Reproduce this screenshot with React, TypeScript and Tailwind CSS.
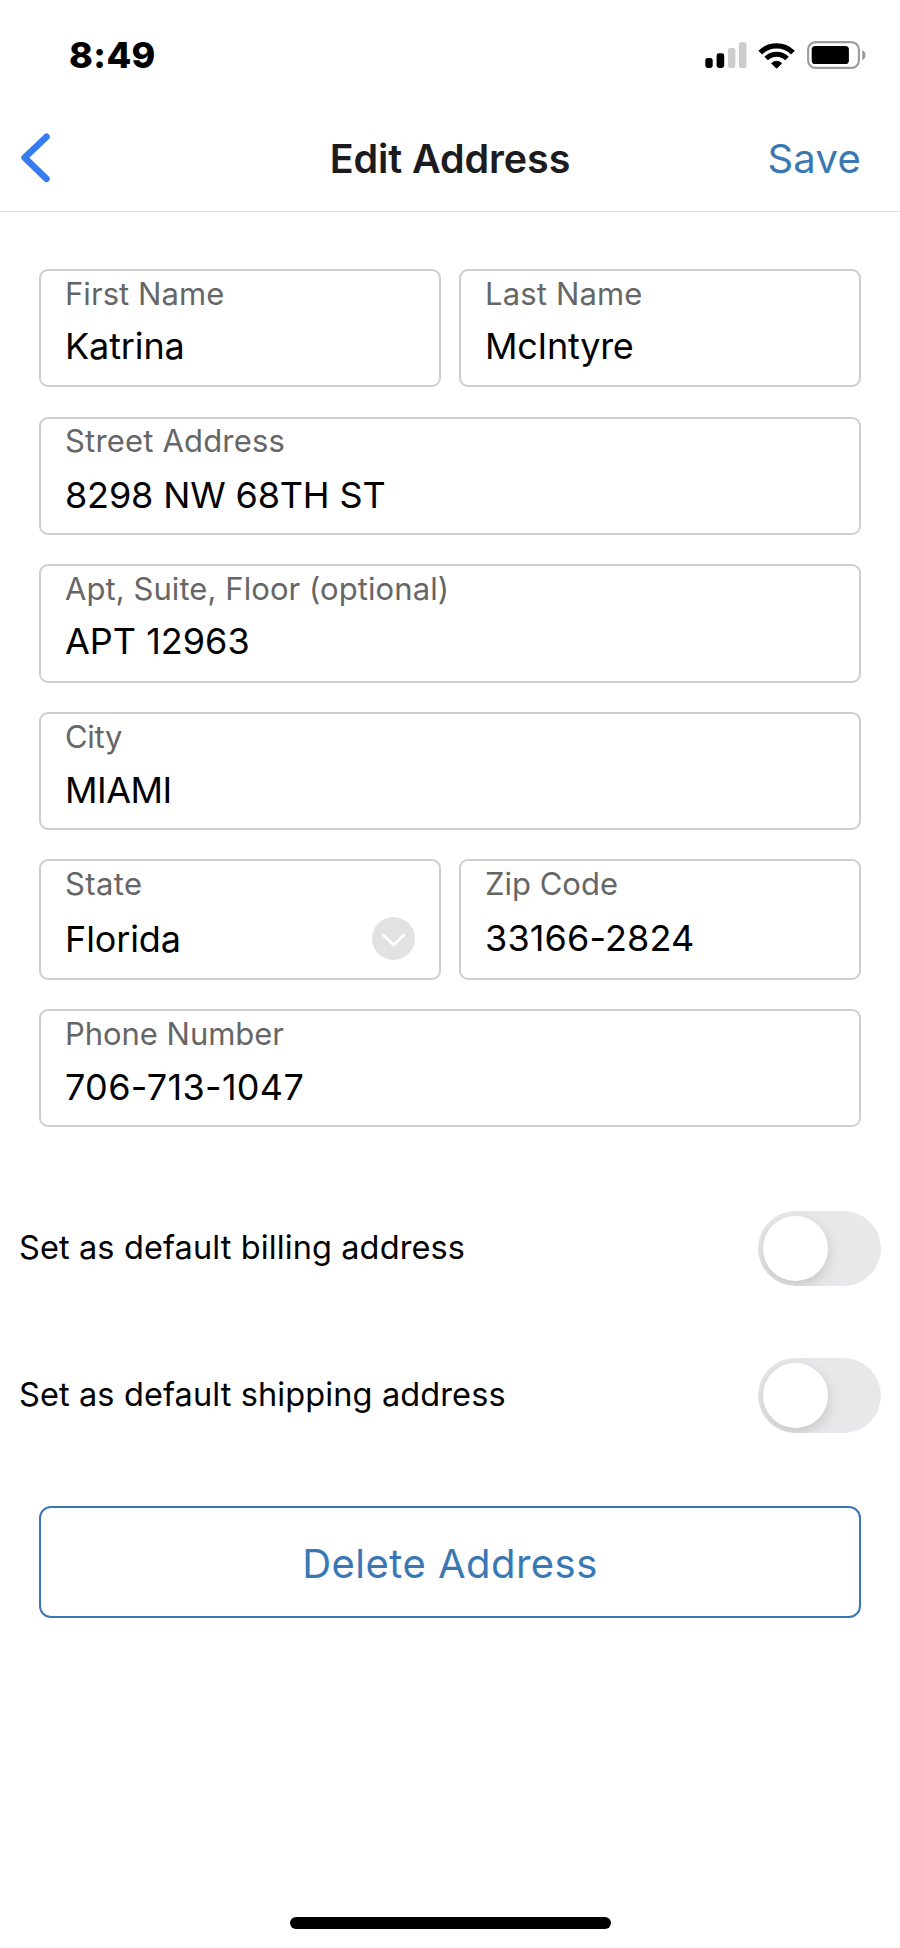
import type { ReactNode } from "react";

function StatusBar() {
  return (
    <div className="flex h-[106px] items-center justify-between pt-1 pl-[69px] pr-[34px]">
      <span className="text-[36px] font-extrabold leading-[44px] tracking-[0.4px] text-black">8:49</span>
      <div className="flex items-center">
        <svg width="42" height="26" viewBox="0 0 42 26" className="mr-[11px]" aria-hidden="true">
          <rect x="0.3" y="16" width="7.4" height="10" rx="2.4" fill="#000" />
          <rect x="11.6" y="11.3" width="7.6" height="14.7" rx="2.4" fill="#000" />
          <rect x="23" y="6" width="7.4" height="20" rx="2" fill="#cdcdcd" />
          <rect x="34" y="0.2" width="7.5" height="25.8" rx="2" fill="#cdcdcd" />
        </svg>
        <svg width="37" height="27" viewBox="0 0 37 27" className="mr-3" aria-hidden="true">
          <path d="M2.3 10.6A23.2 23.2 0 0 1 34.9 10.6" fill="none" stroke="#000" strokeWidth="5.4" />
          <path d="M8.2 16.6A14.7 14.7 0 0 1 29 16.6" fill="none" stroke="#000" strokeWidth="5" />
          <path d="M18.6 26.3L13.6 21.3A7.4 7.4 0 0 1 23.6 21.3Z" fill="#000" stroke="#000" strokeWidth="0.9" strokeLinejoin="round" />
        </svg>
        <svg width="59" height="28" viewBox="0 0 59 28" aria-hidden="true">
          <rect x="1.1" y="1.1" width="50.8" height="25.8" rx="7.5" fill="none" stroke="#9b9b9b" strokeWidth="2.1" />
          <rect x="4.7" y="5" width="37.2" height="18" rx="3.6" fill="#000" />
          <path d="M55.2 9.3C59.6 10.5 59.6 17.8 55.2 19Z" fill="#9b9b9b" />
        </svg>
      </div>
    </div>
  );
}

function Header() {
  return (
    <header className="grid h-[106px] grid-cols-[1fr_auto_1fr] items-center border-b border-[#dedede] pt-px">
      <div className="flex pl-5">
        <button type="button" aria-label="Back">
          <svg width="32" height="48" viewBox="0 0 32 48" className="block overflow-visible" aria-hidden="true">
            <path d="M26.5 1.8L4.6 22.6L26.5 43.8" fill="none" stroke="#377bf0" strokeWidth="6.6" strokeLinecap="round" strokeLinejoin="round" />
          </svg>
        </button>
      </div>
      <h1 className="text-[39.5px] font-semibold leading-[48px] tracking-[-0.1px] text-[#1c1c1e]">Edit Address</h1>
      <div className="flex justify-end pr-[39px]">
        <button type="button" className="pb-px text-[40px] leading-[49px] tracking-[0.25px] text-[#3a78b3]">
          Save
        </button>
      </div>
    </header>
  );
}

type FieldProps = {
  label: string;
  value: string;
  className?: string;
  labelClassName?: string;
  valueClassName?: string;
  trailing?: ReactNode;
};

function Field({
  label,
  value,
  className = "h-[118px] pt-1",
  labelClassName = "tracking-[0.07px]",
  valueClassName = "mt-[13px] tracking-[-0.05px]",
  trailing,
}: FieldProps) {
  return (
    <div className={`flex-1 rounded-[9px] border-2 border-[#cecece] px-6 ${className}`}>
      <div className={`text-[31px] leading-[37px] text-[#666666] ${labelClassName}`}>{label}</div>
      <div className={`flex items-center justify-between text-[36px] leading-[44px] text-black ${valueClassName}`}>
        <span>{value}</span>
        {trailing}
      </div>
    </div>
  );
}

function SelectCaret() {
  return (
    <svg width="43" height="43" viewBox="0 0 43 43" className="-mt-px" aria-hidden="true">
      <circle cx="21.5" cy="21.5" r="21.5" fill="#e2e2e2" />
      <path d="M11.3 18L21.6 28L31.8 18" fill="none" stroke="#fff" strokeWidth="3" strokeLinecap="round" strokeLinejoin="round" />
    </svg>
  );
}

function ToggleRow({ label }: { label: string }) {
  return (
    <div className="flex h-[75px] items-center justify-between pl-[19px] pr-[19px]">
      <span className="pb-0.5 text-[32.5px] leading-[39px] tracking-[0.11px] text-black">{label}</span>
      <button
        type="button"
        role="switch"
        aria-checked="false"
        aria-label={label}
        className="flex h-[75px] w-[123px] items-center overflow-hidden rounded-full bg-[#e8e8ea] pl-[5px]"
      >
        <span className="block size-[65px] rounded-full bg-white shadow-[0_5px_14px_rgba(0,0,0,0.15)]" />
      </button>
    </div>
  );
}

export default function App() {
  return (
    <div className="flex h-[1948px] w-[900px] flex-col overflow-hidden bg-white font-['Inter',sans-serif]">
      <StatusBar />
      <Header />
      <form className="flex flex-col px-[39px] pt-[57px]">
        <div className="flex gap-[18px]">
          <Field label="First Name" value="Katrina" valueClassName="mt-3 tracking-[-0.12px]" />
          <Field
            label="Last Name"
            value="McIntyre"
            labelClassName="tracking-[0.16px]"
            valueClassName="mt-3 tracking-[-0.26px]"
          />
        </div>
        <div className="mt-[30px] flex">
          <Field
            label="Street Address"
            value="8298 NW 68TH ST"
            className="h-[118px] pt-[3px]"
            labelClassName="tracking-[0.18px]"
            valueClassName="mt-3.5 tracking-[-0.15px]"
          />
        </div>
        <div className="mt-[29px] flex">
          <Field
            label="Apt, Suite, Floor (optional)"
            value="APT 12963"
            className="h-[119px] pt-1"
            valueClassName="mt-3 tracking-[0px]"
          />
        </div>
        <div className="mt-[29px] flex">
          <Field
            label="City"
            value="MIAMI"
            labelClassName="tracking-[-0.3px]"
            valueClassName="mt-[13px] tracking-[-0.5px]"
          />
        </div>
        <div className="mt-[29px] flex gap-[18px]">
          <Field
            label="State"
            value="Florida"
            className="h-[121px] pt-1"
            labelClassName="tracking-[0.4px]"
            valueClassName="mt-[15px] tracking-[-0.12px]"
            trailing={<SelectCaret />}
          />
          <Field
            label="Zip Code"
            value="33166-2824"
            className="h-[121px] pt-1"
            labelClassName="tracking-[0px]"
            valueClassName="mt-3.5 tracking-[0.14px]"
          />
        </div>
        <div className="mt-[29px] flex">
          <Field
            label="Phone Number"
            value="706-713-1047"
            labelClassName="tracking-[-0.04px]"
            valueClassName="mt-[13px] tracking-[0.31px]"
          />
        </div>
      </form>
      <div className="mt-[84px] flex flex-col gap-[72px]">
        <ToggleRow label="Set as default billing address" />
        <ToggleRow label="Set as default shipping address" />
      </div>
      <div className="mt-[73px] flex px-[39px]">
        <button
          type="button"
          className="flex h-[112px] flex-1 items-center justify-center rounded-xl border-2 border-[#3a78b3] pt-[3px] text-[40px] leading-[49px] tracking-[0.47px] text-[#3a78b3]"
        >
          Delete Address
        </button>
      </div>
      <div className="mt-[299px] flex justify-center">
        <div className="h-3 w-[321px] rounded-full bg-black" />
      </div>
    </div>
  );
}
